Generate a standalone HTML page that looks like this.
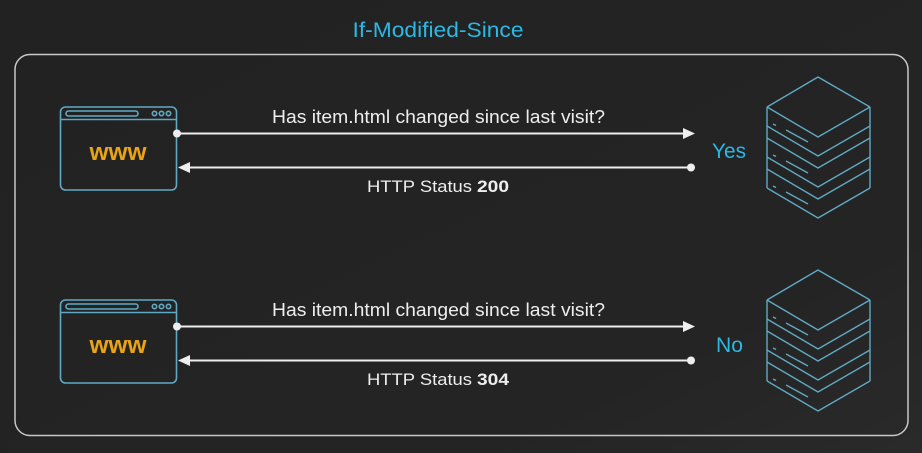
<!DOCTYPE html>
<html><head><style>
html,body{margin:0;padding:0;background:#232323;}
svg{display:block;}
text{font-family:"Liberation Sans",sans-serif;}
</style></head><body>
<svg width="922" height="453" viewBox="0 0 922 453" xmlns="http://www.w3.org/2000/svg">
<defs>
<linearGradient id="bg" x1="0" y1="0" x2="1" y2="1">
<stop offset="0" stop-color="#222"/><stop offset="0.75" stop-color="#242424"/><stop offset="1" stop-color="#2a2a2a"/>
</linearGradient>
<g id="browser" fill="none" stroke="#5fa9c4" stroke-width="1.6">
<rect x="60.5" y="107" width="116" height="83" rx="5"/>
<line x1="60.5" y1="119.5" x2="176.5" y2="119.5"/>
<rect x="66" y="111" width="72" height="5" rx="2.5"/>
<circle cx="154.5" cy="113.5" r="2.2"/><circle cx="161.5" cy="113.5" r="2.2"/><circle cx="168.5" cy="113.5" r="2.2"/>
</g>
<g id="slab" fill="none" stroke="#5fa9c4" stroke-width="1.4" stroke-linejoin="round">
<path d="M767,107 L818,137 L870,107 M767,126 L818,156 L870,126"/>
<line x1="773" y1="124" x2="776" y2="125.5"/>
<line x1="786" y1="130" x2="808" y2="142"/>
</g>
<g id="server">
<path d="M767,107 L818,77 L870,107 M767,107 L767,188 M870,107 L870,188" fill="none" stroke="#5fa9c4" stroke-width="1.4" stroke-linejoin="round"/>
<use href="#slab"/>
<use href="#slab" transform="translate(0,31)"/>
<path d="M767,169 L818,199 L870,169 M767,188 L818,218 L870,188" fill="none" stroke="#5fa9c4" stroke-width="1.4" stroke-linejoin="round"/>
<line x1="773" y1="186" x2="776" y2="187.5" stroke="#5fa9c4" stroke-width="1.4"/>
<line x1="786" y1="192" x2="808" y2="204" stroke="#5fa9c4" stroke-width="1.4"/>
</g>
</defs>
<rect width="922" height="453" fill="url(#bg)"/>
<text x="438" y="37" text-anchor="middle" font-size="21" fill="#2bb8e3" textLength="171" lengthAdjust="spacingAndGlyphs">If-Modified-Since</text>
<rect x="15" y="54.5" width="893" height="381" rx="15" fill="none" stroke="#c8c8c8" stroke-width="1.5"/>

<g id="row">
<use href="#browser"/>
<text x="118" y="160" text-anchor="middle" font-size="24" font-weight="bold" fill="#e8a317" textLength="57" lengthAdjust="spacingAndGlyphs">www</text>
<line x1="177" y1="133.5" x2="684" y2="133.5" stroke="#eee" stroke-width="2"/>
<polygon points="683,128 695,133.5 683,139" fill="#eee"/>
<circle cx="177" cy="133.5" r="4" fill="#eee"/>
<line x1="188" y1="167.5" x2="691" y2="167.5" stroke="#eee" stroke-width="2"/>
<polygon points="178,167.5 190,162 190,173" fill="#eee"/>
<circle cx="691" cy="167.5" r="4" fill="#eee"/>
<text x="272" y="123" font-size="18" fill="#eee" textLength="333" lengthAdjust="spacingAndGlyphs">Has item.html changed since last visit?</text>
<use href="#server"/>
</g>
<text x="367" y="192" font-size="17" fill="#eee" textLength="105" lengthAdjust="spacingAndGlyphs">HTTP Status</text>
<text x="477" y="192" font-size="17" font-weight="bold" fill="#eee" textLength="32" lengthAdjust="spacingAndGlyphs">200</text>
<text x="712" y="158" font-size="21" fill="#2bb8e3" textLength="34" lengthAdjust="spacingAndGlyphs">Yes</text>

<use href="#row" transform="translate(0,193)"/>
<text x="367" y="385" font-size="17" fill="#eee" textLength="105" lengthAdjust="spacingAndGlyphs">HTTP Status</text>
<text x="477" y="385" font-size="17" font-weight="bold" fill="#eee" textLength="32" lengthAdjust="spacingAndGlyphs">304</text>
<text x="716" y="352" font-size="21" fill="#2bb8e3" textLength="27" lengthAdjust="spacingAndGlyphs">No</text>
</svg>
</body></html>
